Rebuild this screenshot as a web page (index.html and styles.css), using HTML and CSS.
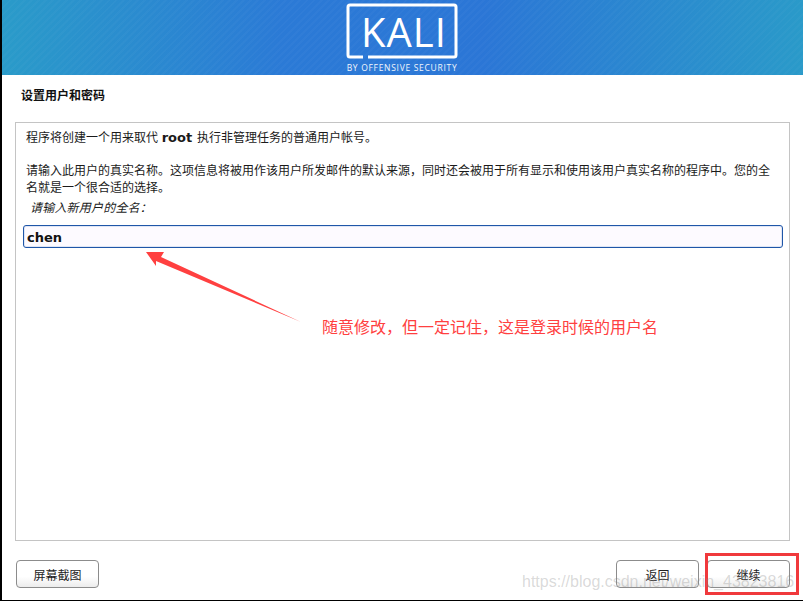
FILE: index.html
```html
<!DOCTYPE html>
<html lang="zh-CN">
<head>
    <meta charset="UTF-8">
    <meta name="viewport" content="width=device-width, initial-scale=1.0">
    <title>设置用户和密码</title>
    <link rel="stylesheet" href="styles.css">
</head>
<body>
    <div id="container">

        <header class="banner">
            <svg class="logo" width="116" height="75" viewBox="0 0 116 75">
                <path class="logoFrame" d="M19 57 H6 a2 2 0 0 1 -2 -2 V7 a2 2 0 0 1 2 -2 H110 a2 2 0 0 1 2 2 V55 a2 2 0 0 1 -2 2 H24"/>
                <text class="logoName" x="60" y="47" text-anchor="middle">KALI</text>
                <text class="logoSub" x="58" y="71" text-anchor="middle">BY OFFENSIVE SECURITY</text>
            </svg>
        </header>

        <h1 class="pageTitle">设置用户和密码</h1>

        <main class="panel">
            <p class="intro">程序将创建一个用来取代 <b>root</b> 执行非管理任务的普通用户帐号。</p>
            <p class="explain">请输入此用户的真实名称。这项信息将被用作该用户所发邮件的默认来源，同时还会被用于所有显示和使用该用户真实名称的程序中。您的全名就是一个很合适的选择。</p>
            <label class="fieldLabel" for="fullName">请输入新用户的全名<span class="colon">：</span></label>
            <input class="nameInput" id="fullName" type="text" value="chen">
        </main>

        <footer class="actions">
            <button class="btn">屏幕截图</button>
            <div class="actionsRight">
                <button class="btn">返回</button>
                <button class="btn">继续</button>
            </div>
        </footer>

        <!-- annotations drawn on top of the screenshot -->
        <svg class="arrow" width="803" height="601" viewBox="0 0 803 601">
            <polygon points="146,252 164,252 161,257 301,322 156,261 156,266"/>
        </svg>
        <p class="note">随意修改，但一定记住，这是登录时候的用户名</p>
        <div class="highlight"></div>
        <div class="watermark">https://blog.csdn.net/weixin_43823816</div>

    </div>
</body>
</html>
```

FILE: styles.css
```css
* {
    box-sizing: border-box;
}

body {
    margin: 0;
    background-color: #fff;
}

#container {
    position: relative;
    width: 803px;
    height: 601px;
    display: flex;
    flex-direction: column;
    overflow: hidden;
    background-color: #fff;
    border-left: 2px solid #000;
    border-bottom: 1px solid #000;
    font-family: "Noto Sans CJK SC", "DejaVu Sans", sans-serif;
    font-size: 12px;
    color: #1a1a1a;
}

.banner {
    height: 75px;
    flex-shrink: 0;
    display: flex;
    justify-content: center;
    padding-right: 2px;
    background:
        repeating-linear-gradient(135deg, rgba(255,255,255,0.025) 0 2px, rgba(255,255,255,0) 2px 5px),
        linear-gradient(90deg, #2a9bc9 0%, #2b7ad6 35%, #2b76d6 60%, #2a9ac9 100%);
}

.logoFrame {
    fill: none;
    stroke: #fff;
    stroke-width: 3;
}

.logoName {
    font-family: "Open Sans", sans-serif;
    font-size: 40px;
    letter-spacing: 1px;
    fill: #fff;
}

.logoSub {
    font-family: "Open Sans", sans-serif;
    font-size: 8.5px;
    letter-spacing: 0.7px;
    fill: #f0f5fc;
}

.pageTitle {
    margin: 12px 0 0 19px;
    height: 35px;
    font-size: 12px;
    line-height: 16px;
    font-weight: 700;
    color: #111;
}

.panel {
    height: 419px;
    margin: 0 13px 0 13px;
    padding: 5px 7px 0 7px;
    border: 1px solid #c4c4c4;
}

.panel p {
    margin: 0;
    padding: 0 10px 0 3px;
    line-height: 17px;
}

.panel b {
    margin: 0 2px 0 1px;
    font-family: "DejaVu Sans", sans-serif;
    font-size: 13px;
}

.panel .explain {
    margin-top: 15px;
}

.fieldLabel {
    display: block;
    margin: 3px 0 0 7px;
    line-height: 17px;
    font-style: italic;
    letter-spacing: 0.2px;
}

.colon {
    font-family: "Noto Sans CJK TC", sans-serif;
}

.nameInput {
    display: block;
    width: 760px;
    height: 23px;
    margin-top: 10px;
    padding: 1px 3px 0 3px;
    border: 1px solid #1f56a8;
    border-radius: 3px;
    box-shadow: inset 0 0 0 1px #dfe6f5;
    background-color: #fdfaff;
    outline: none;
    font-family: "DejaVu Sans", sans-serif;
    font-size: 13px;
    font-weight: 700;
    color: #111;
}

.actions {
    display: flex;
    justify-content: space-between;
    margin: 19px 13px 0 14px;
}

.actionsRight {
    display: flex;
    gap: 8px;
}

.btn {
    width: 83px;
    height: 28px;
    padding: 0;
    border: 1px solid #8c8c8c;
    border-radius: 4px;
    background: linear-gradient(#fff 0%, #fff 60%, #ececec 100%);
    font-family: "Noto Sans CJK SC", sans-serif;
    font-size: 12px;
    color: #222;
}

/* overlays */
.arrow {
    position: absolute;
    left: -2px;
    top: 0;
    pointer-events: none;
}

.arrow polygon {
    fill: #ff4040;
}

.note {
    position: absolute;
    left: 320px;
    top: 314px;
    margin: 0;
    font-size: 16px;
    line-height: 24px;
    white-space: nowrap;
    color: #ff4040;
}

.highlight {
    position: absolute;
    left: 703px;
    top: 553px;
    width: 94px;
    height: 42px;
    border: 3px solid #f0393c;
}

.watermark {
    position: absolute;
    left: 520px;
    top: 572px;
    font-family: "Liberation Sans", sans-serif;
    font-size: 16px;
    line-height: 20px;
    white-space: nowrap;
    color: rgba(130,130,130,0.3);
}
```
